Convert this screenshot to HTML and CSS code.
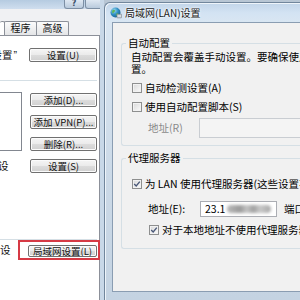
FILE: index.html
```html
<!DOCTYPE html>
<html lang="zh-CN">
<head>
<meta charset="utf-8">
<title>局域网(LAN)设置</title>
<link rel="stylesheet" href="styles.css">
</head>
<body>
<div class="desk">
  <section class="inetopt">
    <div class="lcap">
      <span class="capbtn help">?</span>
      <span class="capbtn close"></span>
    </div>
    <div class="lbody">
      <div class="tabs">
        <span class="tab sel"></span>
        <span class="tab">程序</span>
        <span class="tab">高级</span>
      </div>
      <div class="page">
        <div class="prow r-setup">
          <span class="frag">设置<span class="q">”</span></span>
          <button class="btn w68">设置(U)</button>
        </div>
        <div class="sep s1"></div>
        <div class="dial">
          <div class="listbox"></div>
          <button class="btn">添加(D)...</button>
          <button class="btn">添加 VPN(P)...</button>
          <button class="btn">删除(R)...</button>
          <span class="frag f-dial">设</span>
          <button class="btn">设置(S)</button>
        </div>
        <div class="sep s2"></div>
        <div class="prow r-lan">
          <span class="frag">设</span>
          <div class="mark"><button class="btn w69">局域网设置(L)</button></div>
        </div>
      </div>
    </div>
  </section>

  <section class="lan">
    <div class="lan-inner">
      <div class="titlebar">
        <svg class="ico" viewBox="0 0 12 12" width="12" height="12">
          <defs>
            <radialGradient id="g" cx="0.35" cy="0.3" r="0.8">
              <stop offset="0" stop-color="#9fdcf5"/>
              <stop offset="0.5" stop-color="#2f8fc4"/>
              <stop offset="1" stop-color="#175a86"/>
            </radialGradient>
          </defs>
          <circle cx="5.5" cy="5.5" r="5" fill="url(#g)"/>
          <path d="M2.5 3.2c1-.8 2-.6 2.6.2.4.6-.3 1.2-.9 1.5-.6.3-.4 1.2-1.1 1.4-.6.1-1-.7-1-1.5 0-.6.1-1.2.4-1.6z" fill="#5fb45a"/>
          <path d="M6.6 6.4c.8-.3 1.7.2 1.8 1 .1.7-.6 1.5-1.3 1.6-.6 0-.9-.7-.9-1.3 0-.5 0-1.1.4-1.3z" fill="#5fb45a"/>
          <rect x="7" y="7.2" width="4.6" height="3.6" rx=".5" fill="#d9dde2" stroke="#6f7780" stroke-width=".6"/>
        </svg>
        <span class="ttl">局域网(LAN)设置</span>
      </div>
      <div class="client">
        <fieldset class="grp g1">
          <legend>自动配置</legend>
          <p class="desc">自动配置会覆盖手动设置。要确保使用手动设置，请禁用自动配<br>置。</p>
          <label class="ck c1"><span class="cb"></span>自动检测设置(A)</label>
          <label class="ck c2"><span class="cb"></span>使用自动配置脚本(S)</label>
          <div class="addr a1">
            <span class="albl dis">地址(R)</span>
            <span class="inp dis-inp"></span>
          </div>
        </fieldset>
        <fieldset class="grp g2">
          <legend>代理服务器</legend>
          <label class="ck c3"><span class="cb on"><svg viewBox="0 0 10 10" width="8" height="8"><path d="M1.5 5 L4 7.5 L8.5 2" fill="none" stroke="#4a5878" stroke-width="1.7"/></svg></span>为 LAN 使用代理服务器(这些设置不会应用于拨号或 VPN 连接)(X)</label>
          <div class="addr a2">
            <span class="albl">地址(E):</span>
            <span class="inp ip"><span class="iptxt">23.1</span><span class="blur"></span></span>
            <span class="port">端口(T):</span>
          </div>
          <label class="ck c4"><span class="cb on"><svg viewBox="0 0 10 10" width="8" height="8"><path d="M1.5 5 L4 7.5 L8.5 2" fill="none" stroke="#4a5878" stroke-width="1.7"/></svg></span>对于本地地址不使用代理服务器(B)</label>
        </fieldset>
      </div>
    </div>
  </section>
</div>
</body>
</html>
```

FILE: styles.css
```css
* { box-sizing: border-box; margin: 0; padding: 0; }

html, body { width: 300px; height: 300px; overflow: hidden; }

body {
  background: #b8c6d4;
  font-family: "Noto Sans CJK SC", "Noto Sans", sans-serif;
  font-size: 10.5px;
  color: #000;
}

.desk { display: flex; width: 300px; height: 300px; }

/* ---------- left window: Internet Options (cut) ---------- */
.inetopt {
  flex: 0 0 104px;
  display: flex;
  flex-direction: column;
  background: #f0f1f3;
  border-right: 4px solid #c8d8e8;
  overflow: hidden;
}

.lcap {
  flex: 0 0 9px;
  display: flex;
  align-items: flex-end;
  padding-left: 64px;
  gap: 1px;
  background: linear-gradient(#b5cbe1, #cfdeee);
}

.capbtn {
  flex: 0 0 auto;
  height: 9px;
  border: 1px solid #7d8fa4;
  border-top: 0;
  border-radius: 0 0 3px 3px;
  background: linear-gradient(#dfe8f2, #b9cadc);
  font: bold 8px/8px "DejaVu Sans", sans-serif;
  color: #3b4f66;
  text-align: center;
}
.help { width: 20px; }
.close { width: 43px; }

.lbody {
  flex: 1;
  display: flex;
  flex-direction: column;
  padding-top: 12px;
}

.tabs {
  display: flex;
  align-items: flex-end;
  height: 14px;
}

.tab {
  width: 33px;
  height: 14px;
  margin-left: -1px;
  border: 1px solid #8c9099;
  border-bottom: 0;
  border-radius: 2px 2px 0 0;
  background: linear-gradient(#fbfbfb, #e4e5e7);
  font-size: 10px;
  line-height: 12px;
  text-align: center;
  color: #111;
}
.tab.sel {
  width: 5px;
  margin-left: 0;
  border-left: 0;
  background: #fff;
}

.page {
  flex: 1;
  display: flex;
  flex-direction: column;
  background: #fff;
  border-top: 1px solid #8c9099;
  border-right: 1px solid #8c9099;
  padding-right: 2px;
}

.prow {
  display: flex;
  align-items: center;
  white-space: nowrap;
}
.prow > * { flex-shrink: 0; }

.r-setup {
  margin-top: 12px;
  height: 14px;
  justify-content: flex-end;
  gap: 12px;
}

.frag { font-size: 10.5px; line-height: 12px; color: #111; }
.q { font-family: "Liberation Sans", sans-serif; margin-left: 1px; }

.sep { height: 1px; background: #d5dfe5; }
.s1 { margin-top: 18px; }
.s2 { margin-top: 66px; }

.dial {
  margin-top: 12px;
  display: grid;
  grid-template-columns: 22px 67px;
  grid-auto-rows: 14px;
  column-gap: 8px;
  row-gap: 8px;
}

.listbox {
  grid-column: 1;
  grid-row: 1 / span 3;
  margin-top: -1px;
  border: 1px solid #828790;
  border-left: 0;
  background: #fff;
}

.dial .btn { grid-column: 2; }
.f-dial { grid-column: 1; grid-row: 4; align-self: center; margin-left: -2px; }

.btn {
  height: 14px;
  border: 1px solid #707070;
  border-radius: 2px;
  background: linear-gradient(#f5f5f5 0, #ebebeb 48%, #dcdcdc 52%, #d0d0d0 100%);
  box-shadow: inset 0 0 0 1px #fbfbfb;
  font-family: inherit;
  font-size: 9.5px;
  line-height: 12px;
  color: #111;
  white-space: nowrap;
  overflow: hidden;
  padding: 0;
  text-align: center;
}
.w68 { width: 68px; }
.w69 { width: 69px; height: 12px; line-height: 10px; font-size: 9.5px; }

.r-lan {
  justify-content: space-between;
  margin-right: -3px;
}

.mark {
  width: 82px;
  height: 20px;
  border: 2px solid #d63a45;
  padding: 3px 1px 1px 8px;
  display: flex;
}

/* ---------- right window: LAN settings ---------- */
.lan {
  flex: 1 1 auto;
  min-width: 0;
  margin-top: 2px;
  overflow: hidden;
  border: 1px solid #71869c;
  border-right: 0;
  border-bottom: 0;
  border-radius: 6px 0 0 0;
  background: linear-gradient(180deg, #c2d5e9 0, #d3e3f3 10px, #d9e6f2 20px, #cbd9e7 60%, #c4d3e2 100%);
  box-shadow: inset 1px 1px 0 #eef4fa;
}

.lan-inner {
  width: 380px;
  height: 100%;
  display: flex;
  flex-direction: column;
}

.titlebar {
  flex: 0 0 19px;
  display: flex;
  align-items: center;
  padding-left: 5px;
  gap: 3px;
}

.ico { flex-shrink: 0; margin-top: 1px; }

.ttl {
  font-size: 10px;
  line-height: 12px;
  color: #1a1a1a;
  text-shadow: 0 0 3px #fff, 0 0 2px #fff;
  white-space: nowrap;
}

.client {
  flex: 0 0 270px;
  margin-left: 7px;
  border: 1px solid #8a9db2;
  background: #f1f1f1;
  padding: 14px 0 0 8px;
  display: flex;
  flex-direction: column;
}

.grp {
  border: 1px solid #d5dfe5;
  border-right: 0;
  border-radius: 3px 0 0 3px;
  padding: 0 0 0 9px;
  min-width: 0;
}

.grp legend {
  margin-left: -5px;
  padding: 0 2px;
  font-size: 10.5px;
  line-height: 12px;
}

.g1 { padding-bottom: 7px; }
.g2 { margin-top: 6px; padding-bottom: 12px; }

.desc {
  margin-top: 2px;
  line-height: 12px;
  white-space: nowrap;
}

.ck {
  display: flex;
  align-items: center;
  gap: 2px;
  height: 12px;
  line-height: 12px;
  white-space: nowrap;
}
.c1 { margin-top: 7px; padding-left: 1px; }
.c2 { margin-top: 7px; padding-left: 1px; }
.c3 { margin-top: 14px; padding-left: 1px; }
.c4 { margin-top: 7px; padding-left: 18px; }

.cb {
  flex: 0 0 10px;
  width: 10px;
  height: 10px;
  border: 1px solid #8e8f8f;
  background: linear-gradient(135deg, #d8d8d8, #fbfbfb);
  box-shadow: inset 0 0 0 1px #f2f2f2;
  display: flex;
  align-items: center;
  justify-content: center;
  margin-right: 1px;
}

.addr {
  display: flex;
  align-items: center;
  white-space: nowrap;
}
.a1 { margin-top: 5px; padding-left: 17px; }
.a2 { margin-top: 11px; padding-left: 17px; }

.albl { flex: 0 0 auto; line-height: 12px; }
.a1 .albl { width: 51px; }
.a2 .albl { width: 52px; }
.dis { color: #8a8a8a; }

.inp {
  display: flex;
  align-items: center;
  border: 1px solid #abadb3;
  background: #fff;
}
.dis-inp {
  width: 160px;
  height: 20px;
  border-color: #c9cdd2;
  background: #f4f4f4;
}
.ip {
  width: 77px;
  height: 16px;
  padding-left: 4px;
}
.iptxt { font-size: 10.5px; line-height: 12px; }
.blur {
  width: 44px;
  height: 8px;
  margin-left: 2px;
  border-radius: 4px;
  background: linear-gradient(90deg, #b8b8b8 0, #9a9a9a 30%, #c4c4c4 45%, #a0a0a0 60%, #c8c8c8 75%, #a8a8a8 100%);
  filter: blur(1.5px);
}
.port { margin-left: 7px; line-height: 12px; }
```
